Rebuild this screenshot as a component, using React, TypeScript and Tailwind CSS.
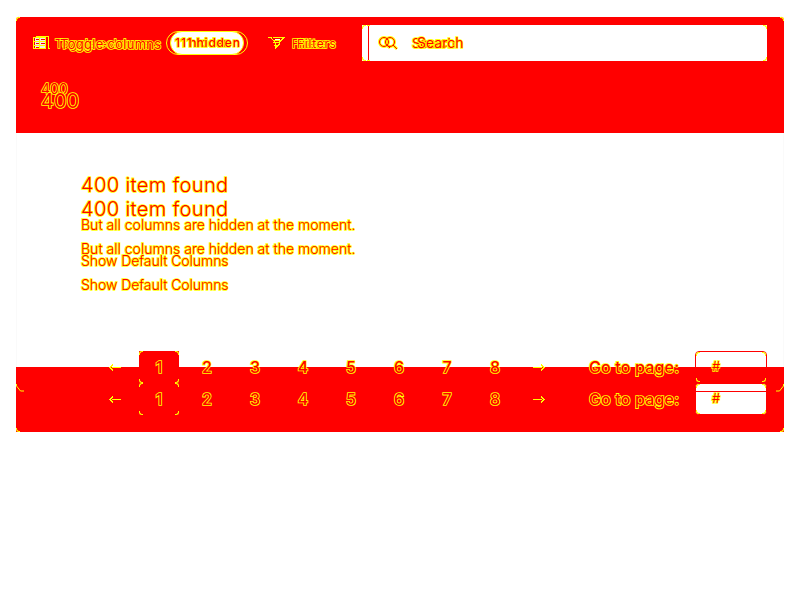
import React from "react";

const edge = "text-[#f00] [-webkit-text-stroke:1.7px_#ff0] [paint-order:stroke_fill] whitespace-nowrap";

function Double({ children, className, shift }: { children: React.ReactNode; className: string; shift: string }) {
  return (
    <span className={`relative inline-block ${className} ${edge}`}>
      {children}
      <span aria-hidden="true" className={`absolute ${shift}`}>{children}</span>
    </span>
  );
}

function Corners({ className = "", top = true, bottom = true }: { className?: string; top?: boolean; bottom?: boolean }) {
  return (
    <span className={`pointer-events-none absolute inset-0 ${className}`}>
      {top && <i className="absolute left-0 top-0 size-[4px] rounded-tl-[3px] border-l border-t border-[#ff0]" />}
      {top && <i className="absolute right-0 top-0 size-[4px] rounded-tr-[3px] border-r border-t border-[#ff0]" />}
      {bottom && <i className="absolute bottom-0 left-0 size-[4px] rounded-bl-[3px] border-b border-l border-[#ff0]" />}
      {bottom && <i className="absolute bottom-0 right-0 size-[4px] rounded-br-[3px] border-b border-r border-[#ff0]" />}
    </span>
  );
}

function Arrow({ right = false }: { right?: boolean }) {
  return (
    <svg width="14" height="10" viewBox="0 0 14 10" className={right ? "-scale-x-100" : ""} fill="none" stroke="#ff0" shapeRendering="crispEdges">
      <path d="M4 5.5h9M5 2.5L2 5.5L5 8.5" />
    </svg>
  );
}

function Pager({ second = false }: { second?: boolean }) {
  return (
    <div className="flex h-8 items-center text-[16px] font-medium">
      <div className="flex w-[123px] justify-end pr-[17px]"><Arrow /></div>
      <div className={`relative flex h-8 w-10 items-center justify-center bg-[#f00] ${edge}`}>
        1<Corners />
      </div>
      {[2, 3, 4, 5, 6, 7, 8].map((n) => (
        <div key={n} className={`ml-2 w-10 text-center ${edge}`}>{n}</div>
      ))}
      <div className="ml-[17px] w-[57px]"><Arrow right /></div>
      <div className={`w-[106px] text-[16px] tracking-[0.16px] ${edge}`}>Go to page:</div>
      <div className={`relative flex h-8 w-[72px] items-center rounded border border-[#f00] pl-[16px] font-normal ${second ? "bg-white" : ""} ${edge}`}>
        {second && <span className="absolute left-0 top-[7px] h-px w-full bg-[#f00]" />}
        <span className="relative text-[13px]">#</span>
        <Corners className="-inset-px" />
      </div>
    </div>
  );
}

export default function App() {
  return (
    <div className="h-[600px] w-[800px] overflow-hidden bg-white px-4 pt-4 font-['Inter','Liberation_Sans',sans-serif]">
      <div className="relative w-[768px]">
        <header className="relative h-[117px] rounded-t-[4px] border-t border-white bg-[#f00]">
          <Corners bottom={false} />
          <div className="flex h-[52px] items-center pl-[17px]">
            <svg width="17" height="14" viewBox="0 0 17 14" fill="none" stroke="#ff0" shapeRendering="crispEdges">
              <rect x="2" y="2" width="10" height="10" fill="#eee" stroke="none" />
              <path d="M.5 1.5h12v11H.5zM2.5.5h13v12h2M1 5.5h12M1 9.5h12M6.5 2v10" />
              <path d="M3 3.5h3M8 3.5h4M3 7.5h3M8 7.5h4M3 11.5h3" stroke="#f00" />
            </svg>
            <span className="-mt-[3px] ml-[5px] w-[109px]">
              <Double className="text-[12px] leading-4 tracking-[0.3px]" shift="left-[5px] top-0 text-[13px] tracking-[0.28px]">Toggle columns</Double>
            </span>
            <div className="relative ml-[2px] flex h-6 w-[82px] items-center justify-center rounded-full border border-[#ff0]">
              <div className="flex h-6 w-[74px] shrink-0 items-center rounded-full border border-[#ff0] bg-white pl-[4px]">
                <Double className="text-[12px] font-medium leading-4 tracking-[0.4px]" shift="left-[6px] top-0 tracking-[0.8px]">11 hidden</Double>
              </div>
            </div>
            <svg className="ml-[20px]" width="17" height="14" viewBox="0 0 17 14" fill="none" stroke="#ff0" shapeRendering="crispEdges">
              <path d="M0 1.5h3l4 5v6l2-2 2-2v-2l5-5H5M5 4.5h9M5 6.5h7M6 9.5h5" />
              <path d="M7 3.5h5" stroke="#fff" />
            </svg>
            <span className="-mt-[3px] ml-[7px] w-[70px]">
              <Double className="text-[12px] leading-4" shift="left-[5px] top-0 tracking-[0.7px]">Filters</Double>
            </span>
            <div className="relative flex h-9 w-[405px] items-center bg-white pl-[16px]">
              <span className="absolute left-[6px] top-0 h-full w-px bg-[#f00]" />
              <i className="absolute left-[5px] top-0 size-[3px] border-t border-[#ff0]" />
              <i className="absolute bottom-0 left-[5px] size-[3px] border-b border-[#ff0]" />
              <Corners />
              <svg width="20" height="14" viewBox="0 0 20 14" fill="none">
                <g stroke="#ff0" strokeWidth="3"><circle cx="6" cy="6" r="4.5" /><circle cx="12" cy="6" r="4.5" /><path d="M15 9l4 4M9 9l3 3" /></g>
                <g stroke="#f00"><circle cx="6" cy="6" r="4.5" /><circle cx="12" cy="6" r="4.5" /><path d="M15 9l4 4M9 9l3 3" /></g>
              </svg>
              <span className="-mt-[2px] ml-[14px]">
                <Double className="text-[13px] leading-4" shift="left-[5px] top-0 text-[14px]">Search</Double>
              </span>
            </div>
          </div>
          <div className={`pl-[25px] pt-[12px] ${edge}`}>
            <div className="h-[12px] text-[14px] leading-4">400</div>
            <div className="-mt-[4px] text-[20px] leading-6">400</div>
          </div>
        </header>
        <main className={`h-[234px] border-x border-[#fafafa] pl-[64px] pt-[40px] font-light ${edge}`}>
          <div className="text-[20px] leading-6 tracking-[0.4px]">400 item found</div>
          <div className="text-[20px] leading-6 tracking-[0.4px]">400 item found</div>
          <div className="-mt-[8px] text-[14px] leading-6 tracking-[0.02px]">But all columns are hidden at the moment.</div>
          <div className="text-[14px] leading-6 tracking-[0.02px]">But all columns are hidden at the moment.</div>
          <div className="-mt-[12px] text-[14px] leading-6 tracking-[-0.05px]">Show Default Columns</div>
          <div className="text-[14px] leading-6 tracking-[-0.05px]">Show Default Columns</div>
        </main>
        <footer className="relative h-[65px] bg-[#f00]">
          <Corners top={false} />
          <svg className="absolute left-0 top-[17px]" width="8" height="8" fill="none" stroke="#ff0"><path d="M.5 0v2l4 5h4" /></svg>
          <svg className="absolute right-0 top-[17px]" width="8" height="8" fill="none" stroke="#ff0"><path d="M7.5 0v2l-4 5h-4" /></svg>
          <div className="relative -top-4">
            <Pager />
            <Pager second />
          </div>
        </footer>
      </div>
    </div>
  );
}
